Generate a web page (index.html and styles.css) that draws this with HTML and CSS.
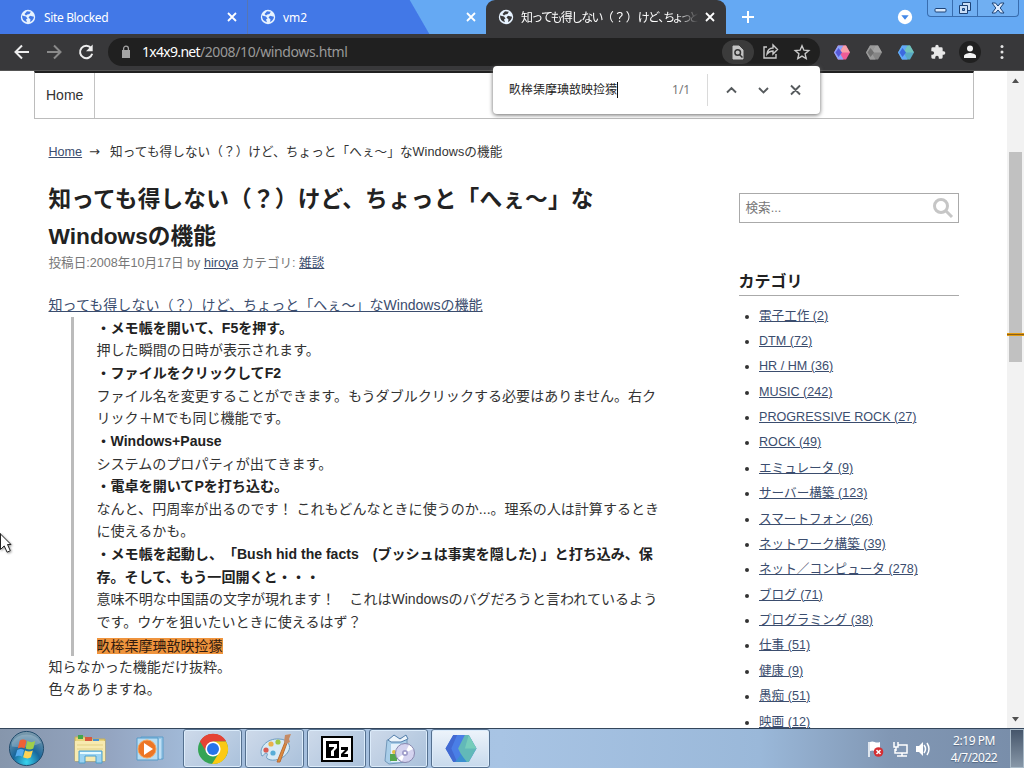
FILE: index.html
```html
<!DOCTYPE html>
<html lang="ja">
<head>
<meta charset="utf-8">
<title>Windowsの機能</title>
<link rel="stylesheet" href="styles.css">
</head>
<body>
<svg width="0" height="0" class="defs" aria-hidden="true">
  <defs>
    <symbol id="globe" viewBox="0 0 16 16"><circle cx="8" cy="8" r="7.2" fill="currentColor"/><path d="M2 6.5 6 7.5 7.500 9.500 6 10.500 7 13.200C3.500 12.500 2 10 2 6.500ZM7 2.300 10.800 2.700 9.500 5 7.200 5.500 6 6.600 4.500 5ZM10 6.800 14 7.800C13.800 10.200 12 12.400 10 13L10.500 10.500 8.500 8.500Z" fill="var(--hole)"/></symbol>
    <symbol id="close" viewBox="0 0 12 12"><path d="M2 2l8 8M10 2l-8 8" stroke="currentColor" stroke-width="1.8" fill="none"/></symbol>
    <symbol id="hex" viewBox="0 0 32 30"><path d="M8 1h16l8 14-8 14H8L0 15Z" fill="var(--a)"/><path d="M8 1h11l-8 14 8 14H8L0 15Z" fill="var(--c)"/><path d="M19 1h5l8 14H11Z" fill="var(--b)"/><path d="M3 15 9 6l7 9-7 9Z" fill="var(--d)"/></symbol>
    <symbol id="hex-large" viewBox="0 0 32 30"><path d="M8 1h16l8 14-8 14H8L0 15Z" fill="#4a7ee6"/><path d="M8 1h4L6 15l6 14H8L0 15Z" fill="#4169d2"/><path d="M20 1h4l8 14-8 14h-4l-7-14Z" fill="#62b9b8"/><path d="m24 1 8 14H20Z" fill="#76cdbb"/><path d="m10 29 6-8 6 8Z" fill="#3b8fd0"/></symbol>
  </defs>
</svg>
<div class="desktop">
  <header class="tabs">
    <div class="tab tab-one"><svg class="globe"><use href="#globe"/></svg><span class="tab-title">Site Blocked</span><svg class="x"><use href="#close"/></svg></div>
    <div class="tab tab-two"><svg class="globe"><use href="#globe"/></svg><span class="tab-title">vm2</span><svg class="x"><use href="#close"/></svg></div>
    <div class="tab tab-active"><svg class="globe"><use href="#globe"/></svg><span class="tab-title jp"><span class="snug">知っても得しない</span>（？）<span class="snug">けど</span><span class="comma">、</span><span class="tight">ちょっと</span></span><svg class="x"><use href="#close"/></svg></div>
    <svg class="plus" viewBox="0 0 14 14"><path d="M7 1v12M1 7h12" stroke="#fff" stroke-width="2"/></svg>
    <svg class="search-tabs" viewBox="0 0 16 16"><circle cx="8" cy="8" r="7.2" fill="#fff"/><path d="M4.300 6.300h7.400L8 10.800Z" fill="#4388e8"/></svg>
    <div class="window-buttons">
      <span><svg viewBox="0 0 24 16"><rect x="7" y="8.500" width="11" height="3.500" rx="1" fill="#d8e8fb" stroke="#1d4377"/></svg></span>
      <span><svg viewBox="0 0 24 16"><g fill="#c9def7" stroke="#1d4377"><path d="M9.500 2.500h8v8h-8Z"/><path d="M6.500 5.500h8v8h-8Z"/><path d="M9.500 8.500h2v2h-2Z" fill="#65a9f3"/></g></svg></span>
      <span class="wide"><svg viewBox="0 0 24 16"><path d="M6 3h3.500L12 6l2.500-3H18l-3.800 5 3.800 5h-3.500L12 10l-2.500 3H6l3.800-5Z" fill="#dceafd" stroke="#1d4377"/></svg></span>
    </div>
  </header>
  <div class="toolbar">
    <svg class="nav-icons" viewBox="0 0 108 36"><g fill="none" stroke-width="2"><path d="M29 18H16M22 11.500 15.500 18l6.500 6.500" stroke="#eee"/><path d="M47 18h13M54 11.500l6.500 6.500-6.500 6.500" stroke="#8a8a8a"/><path d="M91 14a6.200 6.200 0 1 0 1.200 5.800" stroke="#eee"/></g><path d="M92.700 10.500v6.700H86Z" fill="#eee"/></svg>
    <div class="address">
      <svg class="lock" viewBox="0 0 10 14"><path d="M1 5h8v8H1Z" fill="#a4a4a4"/><path d="M2.600 6V3.600a2.400 2.400 0 0 1 4.800 0V6" fill="none" stroke="#a4a4a4" stroke-width="1.300"/></svg>
      <span class="url"><b>1x4x9.net</b>/2008/10/windows.html</span>
      <svg class="address-icons" viewBox="0 0 98 28"><rect x="0" y="2" width="32" height="24" rx="12" fill="#3b3b3b"/><path d="M11 8h6l4 4v9H11Z" fill="#c4c4c4" stroke="#c4c4c4" stroke-linejoin="round"/><circle cx="15.700" cy="14.500" r="2.800" fill="none" stroke="#333" stroke-width="1.500"/><path d="m17.500 16.500 3 3" stroke="#333" stroke-width="1.500"/><g fill="none" stroke="#cacaca" stroke-width="1.400"><path d="M45 9h-3v11h12v-4M45 16c.5-4 3-6 6-6V7l4.500 4.500L51 16v-3c-3 0-4.500 1-6 3Z"/><path d="m80 7.700 1.900 4.500 4.900.4-3.700 3.200 1.100 4.800-4.200-2.500-4.200 2.500 1.100-4.800-3.700-3.200 4.900-.4Z"/></g></svg>
    </div>
    <div class="extensions">
      <svg class="hex pink"><use href="#hex"/></svg>
      <svg class="hex gray"><use href="#hex"/></svg>
      <svg class="hex blue"><use href="#hex"/></svg>
      <svg class="puzzle" viewBox="0 0 24 24"><path d="M20.500 11H19V7a2 2 0 0 0-2-2h-4V3.500a2.500 2.500 0 0 0-5 0V5H4a2 2 0 0 0-2 2v3.800h1.500a2.700 2.700 0 0 1 0 5.400H2V20a2 2 0 0 0 2 2h3.800v-1.500a2.700 2.700 0 0 1 5.400 0V22H17a2 2 0 0 0 2-2v-4h1.500a2.500 2.500 0 0 0 0-5Z" fill="#e8e8e8"/></svg>
      <svg class="profile" viewBox="0 0 22 22"><circle cx="11" cy="11" r="11" fill="#202020"/><circle cx="11" cy="7.500" r="3" fill="#f3f3f3"/><path d="M5 17v-2c0-2 4-3 6-3s6 1 6 3v2Z" fill="#f3f3f3"/></svg>
      <svg class="dots" viewBox="0 0 4 16"><g fill="#e4e4e4"><circle cx="2" cy="2.500" r="1.500"/><circle cx="2" cy="8" r="1.500"/><circle cx="2" cy="13.500" r="1.500"/></g></svg>
    </div>
  </div>
  <div class="viewport">
    <div class="page">
      <nav class="site-nav"><a>Home</a></nav>
      <div class="columns">
        <main>
          <div class="crumbs"><a>Home</a><span class="arrow">→</span><span class="trail">知っても得しない（？）けど、ちょっと「へぇ〜」なWindowsの機能</span></div>
          <h1><span class="spread">知っても得しない（？）けど、ちょっと「へぇ〜」な</span><br>Windowsの機能</h1>
          <div class="meta">投稿日:2008年10月17日 by <a>hiroya</a> カテゴリ: <a>雑談</a></div>
          <div class="entry">
            <div><a>知っても得しない（？）けど、ちょっと「へぇ〜」なWindowsの機能</a></div>
            <blockquote>
              <b>・メモ帳を開いて、F5を押す。</b><br>
              押した瞬間の日時が表示されます。<br>
              <b>・ファイルをクリックしてF2</b><br>
              ファイル名を変更することができます。もうダブルクリックする必要はありません。右ク<br>リック＋Mでも同じ機能です。<br>
              <b>・Windows+Pause</b><br>
              システムのプロパティが出てきます。<br>
              <b>・電卓を開いてPを打ち込む。</b><br>
              なんと、円周率が出るのです！ これもどんなときに使うのか...。理系の人は計算するとき<br>に使えるかも。<br>
              <b>・メモ帳を起動し、「Bush hid the facts　(ブッシュは事実を隠した) 」と打ち込み、保<br>存。そして、もう一回開くと・・・</b><br>
              意味不明な中国語の文字が現れます！　これはWindowsのバグだろうと言われているよう<br>です。ウケを狙いたいときに使えるはず？<br>
              <mark>畂桳栠摩琠敨映捡獴</mark>
            </blockquote>
            <div>知らなかった機能だけ抜粋。<br>色々ありますね。</div>
          </div>
        </main>
        <aside>
          <div class="search"><span>検索...</span><svg viewBox="0 0 22 22"><circle cx="9" cy="9" r="6.500" fill="none" stroke="#c6c6c6" stroke-width="3"/><path d="m14 14 6 6" stroke="#c6c6c6" stroke-width="3"/></svg></div>
          <h2>カテゴリ</h2>
          <ul>
            <li><a>電子工作 (2)</a></li><li><a>DTM (72)</a></li><li><a>HR / HM (36)</a></li><li><a>MUSIC (242)</a></li><li><a>PROGRESSIVE ROCK (27)</a></li><li><a>ROCK (49)</a></li><li><a>エミュレータ (9)</a></li><li><a>サーバー構築 (123)</a></li><li><a>スマートフォン (26)</a></li><li><a>ネットワーク構築 (39)</a></li><li><a>ネット／コンピュータ (278)</a></li><li><a>ブログ (71)</a></li><li><a>プログラミング (38)</a></li><li><a>仕事 (51)</a></li><li><a>健康 (9)</a></li><li><a>愚痴 (51)</a></li><li><a>映画 (12)</a></li>
          </ul>
        </aside>
      </div>
    </div>
    <div class="scrollbar"><svg viewBox="0 0 17 658"><path d="M5 12h7L8.500 7.500ZM5 646h7l-3.500 4.500Z" fill="#505050"/><path d="M2 81h13v210H2Z" fill="#c1c1c1"/><path d="M0 262h17v3H0Z" fill="#e39a10"/><path d="M0 263h17v1H0Z" fill="#8a6018"/></svg></div>
  </div>
  <footer class="taskbar">
    <svg class="start" viewBox="0 0 40 40"><defs><radialGradient id="orb" cx=".5" cy=".9" r=".9"><stop stop-color="#38d5ee"/><stop offset=".45" stop-color="#19679c"/><stop offset="1" stop-color="#829eae"/></radialGradient></defs><circle cx="20" cy="20" r="17.500" fill="url(#orb)" stroke="#204b6c"/><path d="M5 14a16 13 0 0 1 30 0c-8 4-20 6-30 4Z" fill="#fff" opacity=".22"/><path d="M13 12c3-2 5-1 7 0l-2 8c-2-1-4-1.500-7 0Z" fill="#ef6135"/><path d="M21 12c3 2 5 2 8 0l-2 8c-3 1.500-5 1-8 0Z" fill="#9fce4b"/><path d="M10.500 21.500c3-1.500 5-1 7 0l-2 7c-2-1-4-1.500-7 0Z" fill="#55abed"/><path d="M18.500 22c3 1.500 5 1.500 8 0l-2 7c-3 2-5 1-8 0Z" fill="#fed354"/></svg>
    <svg class="explorer" viewBox="0 0 34 30"><path d="M2 3h11l2 2h17v22H2Z" fill="#e9d57c" stroke="#c4ad5b"/><path d="M5 1h5v4H5Z" fill="#43a64c"/><path d="M12 3h7v4h-7Z" fill="#d7593e"/><path d="M20 5h6v3h-6Z" fill="#4a91d0"/><path d="M2 7h30v20H2Z" fill="#f7eab0"/><path d="M4 11h26M4 15h26" stroke="#e3d184"/><path d="M6 29V17h23v12h-6v-7H12v7Z" fill="#9bd3f2" stroke="#4b9fcc"/><path d="M7 19h21" stroke="#e5fbff" stroke-width="2"/></svg>
    <svg class="player" viewBox="0 0 30 26"><path d="M5 1h22v22H5Z" fill="#9bc9e8" stroke="#5b9dcb"/><path d="M1 2h21v22H1Z" fill="#b8ddf2" stroke="#559bc9"/><path d="M24 3v20" stroke="#e5f5ff" stroke-width="1"/><circle cx="11" cy="13" r="9" fill="#ed7625" stroke="#f5a45b"/><path d="m8 7 9 6-9 6Z" fill="#fff"/></svg>
    <div class="apps">
      <div class="app"><svg viewBox="0 0 32 32"><circle cx="16" cy="16" r="15" fill="#35a455"/><path d="M16 16 3 8.500A15 15 0 0 1 29 8.500H16Z" fill="#e54335"/><path d="M3 8.500 10 20l6-12h13A15 15 0 0 0 3 8.500Z" fill="#e54335"/><path d="M16 8.500h13A15 15 0 0 1 15 31l7.500-12Z" fill="#fbc913"/><circle cx="16" cy="16" r="7.600" fill="#fff"/><circle cx="16" cy="16" r="6" fill="#2874ea"/></svg></div>
      <div class="app"><svg viewBox="0 0 32 32"><path d="M3 23C-1 15 8 5 20 6c9 0 13 7 9 13-4 7-15 10-20 7-4-2 2-5-2-6-2 0-2 3-4 3Z" fill="#d7eaf5" stroke="#6d9cc0"/><circle cx="7" cy="17" r="2.600" fill="#d95a50"/><circle cx="12" cy="11" r="2.600" fill="#eab149"/><circle cx="19" cy="9" r="2.600" fill="#9cc842"/><circle cx="14" cy="20" r="2.600" fill="#58add7"/><path d="m18 29 8-20 2 1-7 19Z" fill="#df8c3c" stroke="#b76d38"/><path d="m25 9 1-7 6-1-2 5 1 3-4 2Z" fill="#c58b65"/></svg></div>
      <div class="app"><svg viewBox="0 0 32 26"><path d="M1 1h30v24H1Z" fill="#fff" stroke="#000" stroke-width="2"/><path d="M5 5h13v17H5Z"/><path d="M8 8h8v4l-3 3v5h-3v-5l3-3v-1H8Z" fill="#fff"/><path d="M20 11h7v3l-4 4h4v3h-7v-3l4-4h-4Z"/></svg></div>
      <div class="app"><svg viewBox="0 0 32 32"><path d="m4 7 17-2 3 2v22l-18 2-4-3Z" fill="#a9cee9" stroke="#7298b9"/><path d="M8 11h14v18H8Z" fill="#e5f1fb"/><path d="m5 7 6-5 6 4 6-4 2 4-7 3H8Z" fill="#edf5fb" stroke="#537fac"/><path d="M7 21h7v7H7Z" fill="#55a64d"/><circle cx="11" cy="19" r="2" fill="#e4bf41"/><circle cx="22" cy="20" r="9.500" fill="#d4d3ef" stroke="#8987ae"/><path d="m22 20 4-8a9 9 0 0 1 4 4ZM22 20l-7 5 4 3Z" fill="#fff"/><circle cx="22" cy="20" r="3" fill="#9f9dca"/><circle cx="22" cy="20" r="1.300" fill="#fff"/></svg></div>
      <div class="app active"><svg class="big-hex"><use href="#hex-large"/></svg></div>
    </div>
    <svg class="tray" viewBox="0 0 66 20"><g fill="none" stroke="#fff" stroke-width="1.500"><path d="M2 3v15"/><path d="M31 6h9v8h-12v-4M35 14v3M30 17h10M27 3v5h4V3M29 8v4"/><path d="M57 6q3 4 0 8M60 4q4 6 0 12"/></g><path d="M3 3c4-2 5 2 10 0v9c-5 2-6-2-10 0Z" fill="#fff"/><circle cx="11.500" cy="13" r="4.800" fill="#d52e32"/><path d="m9.500 11 4 4m0-4-4 4" stroke="#fff" stroke-width="1.500"/><path d="M49 7h3l4-4v14l-4-4h-3Z" fill="#fff"/></svg>
    <div class="clock"><span>2:19 PM</span><span>4/7/2022</span></div>
    <div class="show-desktop"></div>
  </footer>
  <div class="find"><span class="query">畂桳栠摩琠敨映捡獴</span><i class="caret"></i><span class="count">1/1</span><svg viewBox="0 0 98 32"><path d="M.5 0v32" stroke="#dadada"/><g fill="none" stroke="#575b5e" stroke-width="1.900"><path d="m20 18.500 4.500-4.500 4.500 4.500M52 14l4.500 4.500L61 14M84 11.500l9 9m0-9-9 9"/></g></svg></div>
  <svg class="pointer" viewBox="0 0 13 22"><path d="M-2 -1.500 11 11.500H7.500l2.800 6.200-3.200 1.500-2.900-6.300L.5 16.500v-16" fill="#fff" stroke="#222"/></svg>
</div>
</body>
</html>
```

FILE: styles.css
```css
* { box-sizing: border-box; }
body { margin: 0; overflow: hidden; font-family: "Liberation Sans", "Noto Sans CJK JP", sans-serif; text-spacing-trim: space-all; }
.defs { position: absolute; }
svg { display: block; flex: none; }
.desktop { position: relative; width: 1024px; height: 768px; display: flex; flex-direction: column; background: #fff; overflow: hidden; }

.tabs { height: 34px; flex: none; display: flex; align-items: center; background: linear-gradient(90deg, #4278e7 0 400px, #65a9f3 440px); color: #fff; font-family: "Noto Sans", "Noto Sans CJK JP", sans-serif; font-size: 12px; --hole: #4278e7; }
.tab { height: 34px; display: flex; align-items: center; flex: none; }
.tab .globe { width: 16px; height: 16px; margin-right: 7px; color: #e7f3ff; }
.tab .x { width: 12px; height: 12px; margin-left: auto; }
.tab-one { width: 247px; padding: 0 9px 0 20px; background: #4278e7; }
.tab-one .tab-title { letter-spacing: -0.35px; margin-left: 1px; }
.tab-two { width: 239px; padding: 0 9px 0 12px; border-left: 1px solid #5676b4; background: linear-gradient(60deg, #4278e7 calc(50% + 45px), #65a9f3 calc(50% + 46px)); }
.tab-active { width: 240px; padding: 0 10px 0 12px; background: #38383a; border-radius: 9px 9px 0 0; --hole: #38383a; }
.tab-active .tab-title { width: 177px; white-space: nowrap; mask-image: linear-gradient(90deg, #000 156px, transparent 177px); }
.snug { letter-spacing: -1.75px; }
.comma { letter-spacing: -7px; }
.tight { letter-spacing: -3.600px; }
.plus { width: 14px; height: 14px; margin-left: 15px; }
.search-tabs { width: 16px; height: 16px; margin-left: 142px; }
.window-buttons { display: flex; width: 92px; height: 17px; align-self: flex-start; margin-left: 14px; border: 1px solid #386daf; border-top: 0; border-radius: 0 0 4px 4px; background: #70aff2; }
.window-buttons span { width: 25px; border-right: 1px solid #386daf; }
.window-buttons svg { width: 24px; height: 16px; }
.window-buttons .wide { width: 41px; border: 0; padding-left: 8px; }

.toolbar { height: 37px; flex: none; display: flex; align-items: center; background: #38383a; border-bottom: 1px solid #555; }
.nav-icons { width: 108px; height: 36px; }
.address { display: flex; align-items: center; width: 712px; height: 28px; border-radius: 14px; background: #202020; padding-left: 13px; }
.lock { width: 10px; height: 14px; }
.url { margin-left: 11px; font: 14px/20px "Noto Sans", sans-serif; color: #999; letter-spacing: -0.38px; }
.url b { font-weight: 400; color: #fff; letter-spacing: -0.7px; }
.address-icons { width: 98px; height: 28px; margin-left: auto; }
.extensions { display: flex; align-items: center; }
.hex { width: 16px; height: 15px; margin-left: 14px; margin-right: 2px; }
.pink { --a: #ef5c96; --b: #f7a0a9; --c: #8aa4fc; --d: #5758d8; }
.gray { --a: #858585; --b: #a2a2a2; --c: #999; --d: #707070; }
.blue { --a: #58aac4; --b: #72c4bb; --c: #62a9f9; --d: #3c69e0; }
.puzzle { width: 16px; height: 16px; margin-left: 14px; }
.profile { width: 22px; height: 22px; margin-left: 13px; }
.dots { width: 4px; height: 16px; margin-left: 19px; }

.viewport { height: 657px; flex: none; display: flex; justify-content: space-between; overflow: hidden; }
.page { width: 940px; margin-left: 34px; color: #333; }
.page a { color: #3b4d6e; text-decoration: underline; text-underline-offset: 1px; text-decoration-thickness: 1px; }
.site-nav { height: 48px; border: 1px solid #bcbcbc; border-top: 2px solid #202020; display: flex; }
.site-nav a { width: 60px; border-right: 1px solid #c3c3c3; padding-left: 11px; font-size: 14px; line-height: 45px; color: #333; text-decoration: none; }
.columns { display: flex; }
main { width: 624px; margin-left: 14.500px; white-space: nowrap; }
.crumbs { height: 24px; margin-top: 21px; font-size: 12.600px; line-height: 24px; display: flex; }
.trail { letter-spacing: .09px; }
.arrow { margin: 0 9px 0 7px; font-family: "DejaVu Sans", sans-serif; font-size: 13px; width: 12px; }
h1 { margin: 17px 0 0; font-size: 22.700px; line-height: 37px; color: #222; height: 73px; }
.spread { letter-spacing: .17px; }
.meta { height: 20px; font-size: 12.600px; line-height: 18px; color: #777; }
.entry { margin-top: 20px; font-size: 14.050px; line-height: 22.640px; }
.entry > div:first-child { height: 22.700px; }
blockquote { height: 339px; margin: 0 0 0 22px; border-left: 3px solid #bbb; padding-left: 23px; }
blockquote b { color: #222; }
mark { background: #ef943d; color: #321b0e; display: inline-block; height: 16px; line-height: 16px; font-size: 14px; vertical-align: -1px; }
aside { width: 220px; margin-left: 66px; padding-top: 74px; }
.search { height: 30px; border: 1px solid #aaa; display: flex; align-items: center; justify-content: space-between; padding: 0 4px 0 6px; color: #777; font-size: 12.600px; }
.search span { padding-bottom: 3px; }
.search svg { width: 22px; height: 22px; }
h2 { margin: 45px 0 7.600px; height: 28px; line-height: 27px; border-bottom: 1px solid #aaa; font-size: 16px; color: #222; }
ul { margin: 0; padding: 0 0 0 20.500px; list-style: disc; font-size: 12.600px; white-space: nowrap; line-height: 25.375px; }
li { height: 25.375px; }
li::marker { font-size: 12px; }
.scrollbar { width: 17px; background: #f2f2f2; }
.scrollbar svg { width: 17px; height: 658px; }

.taskbar { height: 40px; flex: none; display: flex; align-items: center; border-top: 1px solid #34465b; background: linear-gradient(90deg, #8696ac, #94a5c1 110px, #a2bbd9 190px, #a8c4e4 500px, #9ab8d9 760px, #8197b4 890px, #788da9); }
.start { width: 39px; height: 39px; margin-left: 7px; }
.explorer { width: 34px; height: 30px; margin-left: 27px; }
.player { width: 30px; height: 26px; margin-left: 29px; }
.apps { display: flex; gap: 3px; margin-left: 17px; }
.app { width: 59px; height: 39px; display: flex; align-items: center; justify-content: center; border: 1px solid #55708f; border-radius: 3px; box-shadow: inset 0 0 0 1px #dcecfb; background: linear-gradient(135deg, #cedaea, #aac1db); }
.app svg { width: 32px; height: 32px; }
.app.active { background: linear-gradient(#edf4fb, #c7d9ec); }
.app .big-hex { width: 32px; height: 29px; }
.tray { width: 66px; height: 20px; margin-left: auto; }
.clock { width: 58px; margin-left: 12px; color: #fff; display: flex; flex-direction: column; align-items: center; font: 12px/17px "Noto Sans", sans-serif; letter-spacing: -0.45px; text-shadow: 0 1px 1px #536781; }
.show-desktop { width: 14px; height: 39px; margin-left: 7px; border: 1px solid #a9bac8; background: linear-gradient(#46566b, #8797a8); }

.find { position: absolute; left: 493px; top: 66px; width: 327px; height: 48px; display: flex; align-items: center; border-radius: 4px; background: #fff; box-shadow: 0 1px 4px #666; padding-left: 16px; font: 12px/16px "Noto Sans", "Noto Sans CJK JP", sans-serif; color: #222; }
.caret { width: 1px; height: 16px; background: #111; }
.find .count { width: 20px; margin-left: 54px; color: #777; }
.find svg { width: 98px; height: 32px; margin-left: 15px; }
.pointer { position: absolute; left: 0; top: 533px; width: 13px; height: 22px; filter: drop-shadow(1px 1px 1px #999); }
```
